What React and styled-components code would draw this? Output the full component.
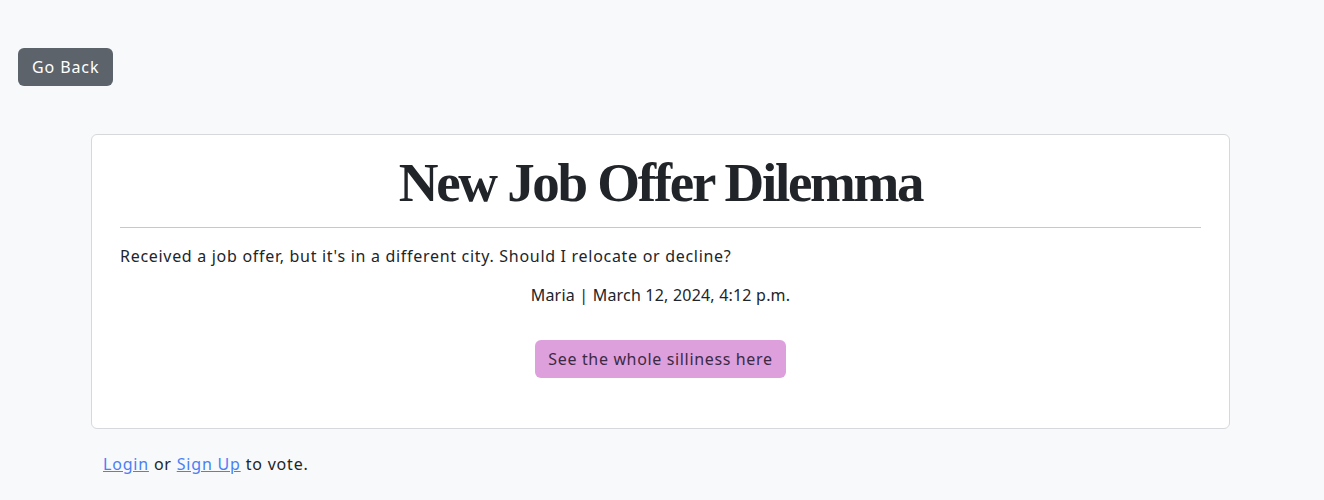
import React from "react";
import styled, { createGlobalStyle } from "styled-components";

const Global = createGlobalStyle`
  html, body { margin: 0; padding: 0; }
  body {
    background: #f8f9fa;
    font-family: "Noto Sans", "DejaVu Sans", sans-serif;
    color: #212529;
  }
`;

const Page = styled.div`
  padding: 48px 0 20px 0;
`;

const TopBar = styled.div`
  padding-left: 18px;
  height: 38px;
`;

const BackButton = styled.button`
  height: 38px;
  padding: 0 14px;
  background: #5c636a;
  color: #fff;
  border: none;
  border-radius: 6px;
  font-family: "Noto Sans", sans-serif;
  font-size: 16px;
  letter-spacing: 0.9px;
  cursor: pointer;
`;

const Container = styled.div`
  width: 1139px;
  margin: 48px auto 0 91px;
`;

const Card = styled.div`
  background: #fff;
  border: 1px solid #d6d8db;
  border-radius: 6px;
  padding: 20px 28px 50px 28px;
  display: flex;
  flex-direction: column;
`;

const Title = styled.h1`
  margin: 0;
  text-align: center;
  font-family: "Liberation Serif", serif;
  font-weight: 700;
  font-size: 55px;
  line-height: 56px;
  letter-spacing: -2.3px;
  color: #212529;
`;

const Rule = styled.hr`
  border: none;
  border-top: 1px solid #c8c8c8;
  margin: 16px 0 0 0;
  width: 100%;
`;

const Body = styled.p`
  margin: 16px 0 0 0;
  font-size: 16px;
  line-height: 24px;
  letter-spacing: 0.7px;
  color: #212529;
`;

const Meta = styled.p`
  margin: 15px 0 0 0;
  text-align: center;
  font-size: 16px;
  line-height: 24px;
  letter-spacing: 0.2px;
  color: #212529;
`;

const ButtonRow = styled.div`
  display: flex;
  justify-content: center;
  margin-top: 33px;
`;

const LinkButton = styled.a`
  display: inline-flex;
  align-items: center;
  height: 38px;
  padding: 0 13px;
  background: #dda0dd;
  color: #3b2a44;
  border-radius: 6px;
  font-family: "Noto Sans", sans-serif;
  font-size: 16px;
  letter-spacing: 0.65px;
  text-decoration: none;
`;

const Footer = styled.p`
  margin: 23px 0 0 12px;
  font-size: 16px;
  line-height: 24px;
  letter-spacing: 0.8px;
  color: #212529;
`;

const A = styled.a`
  color: #4a7ff5;
  text-decoration: underline;
`;

export default function App() {
  return (
    <>
      <Global />
      <Page>
        <TopBar>
          <BackButton>Go Back</BackButton>
        </TopBar>
        <Container>
          <Card>
            <Title>New Job Offer Dilemma</Title>
            <Rule />
            <Body>Received a job offer, but it's in a different city. Should I relocate or decline?</Body>
            <Meta>Maria | March 12, 2024, 4:12 p.m.</Meta>
            <ButtonRow>
              <LinkButton href="#">See the whole silliness here</LinkButton>
            </ButtonRow>
          </Card>
          <Footer>
            <A href="#">Login</A> or <A href="#">Sign Up</A> to vote.
          </Footer>
        </Container>
      </Page>
    </>
  );
}
